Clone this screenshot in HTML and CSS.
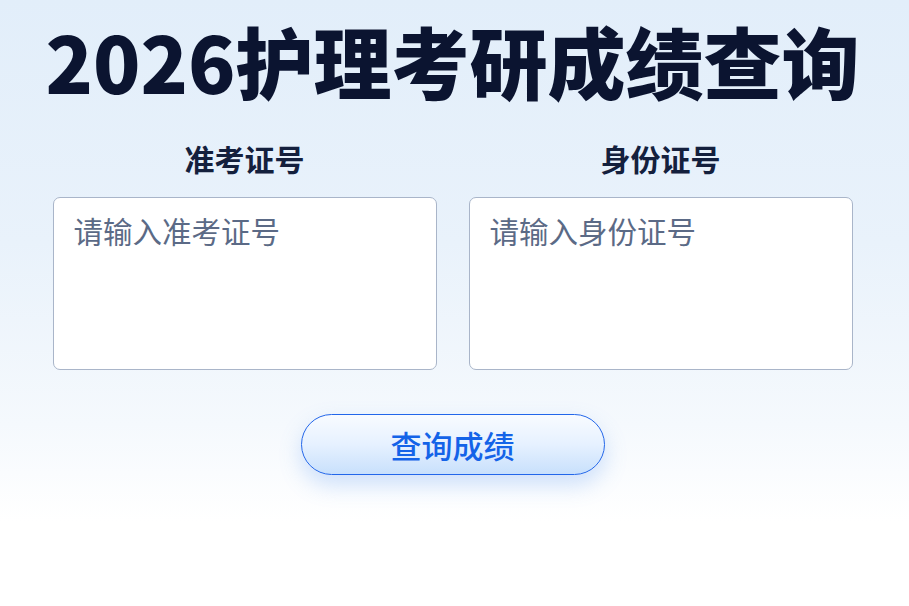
FILE: index.html
```html
<!DOCTYPE html>
<html lang="zh-CN">
<head>
<meta charset="utf-8">
<title>2026护理考研成绩查询</title>
<link rel="stylesheet" href="styles.css">
</head>
<body>
<main class="page">
  <h1 class="title">2026护理考研成绩查询</h1>
  <div class="fields">
    <label class="field">
      <span class="field-label">准考证号</span>
      <textarea class="field-input" placeholder="请输入准考证号"></textarea>
    </label>
    <label class="field">
      <span class="field-label">身份证号</span>
      <textarea class="field-input" placeholder="请输入身份证号"></textarea>
    </label>
  </div>
  <div class="actions">
    <button class="query-btn" type="button">查询成绩</button>
  </div>
</main>
</body>
</html>
```

FILE: styles.css
```css
html, body {
  margin: 0;
  padding: 0;
  height: 100%;
}
body {
  font-family: "Noto Sans CJK SC", "Noto Sans", sans-serif;
  background: linear-gradient(180deg, #e2eefa 0%, #e9f2fb 40%, #f5f9fd 70%, #ffffff 86%, #ffffff 100%);
  overflow: hidden;
}
.page {
  width: 905px;
  height: 606px;
  display: flex;
  flex-direction: column;
  align-items: center;
}
.title {
  margin: 10px 0 0;
  font-size: 78px;
  font-weight: 900;
  color: #0b1430;
  line-height: 100px;
  white-space: nowrap;
}
.fields {
  margin-top: 28px;
  display: flex;
  gap: 32px;
}
.field {
  display: flex;
  flex-direction: column;
  align-items: center;
  gap: 19px;
}
.field-label {
  font-size: 30px;
  font-weight: 700;
  color: #14203d;
  line-height: 40px;
}
.field-input {
  box-sizing: border-box;
  width: 384px;
  height: 173px;
  border: 1px solid #a9b5c9;
  border-radius: 7px;
  background: #ffffff;
  padding: 12px 20px;
  font-family: inherit;
  font-size: 29.5px;
  line-height: 40px;
  color: #1f2a44;
  resize: none;
  outline: none;
}
.field-input::placeholder {
  color: #5b6a86;
}
.actions {
  margin-top: 44px;
}
.query-btn {
  box-sizing: border-box;
  width: 304px;
  height: 61px;
  border: 1.5px solid #2266ea;
  border-radius: 31px;
  background: linear-gradient(180deg, #f8fbff 0%, #e6f1ff 50%, #c8e0fc 100%);
  box-shadow: 0 10px 22px rgba(90, 150, 240, 0.28);
  font-family: inherit;
  font-size: 31px;
  font-weight: 500;
  color: #1463e8;
  padding: 0;
  cursor: pointer;
}
```
